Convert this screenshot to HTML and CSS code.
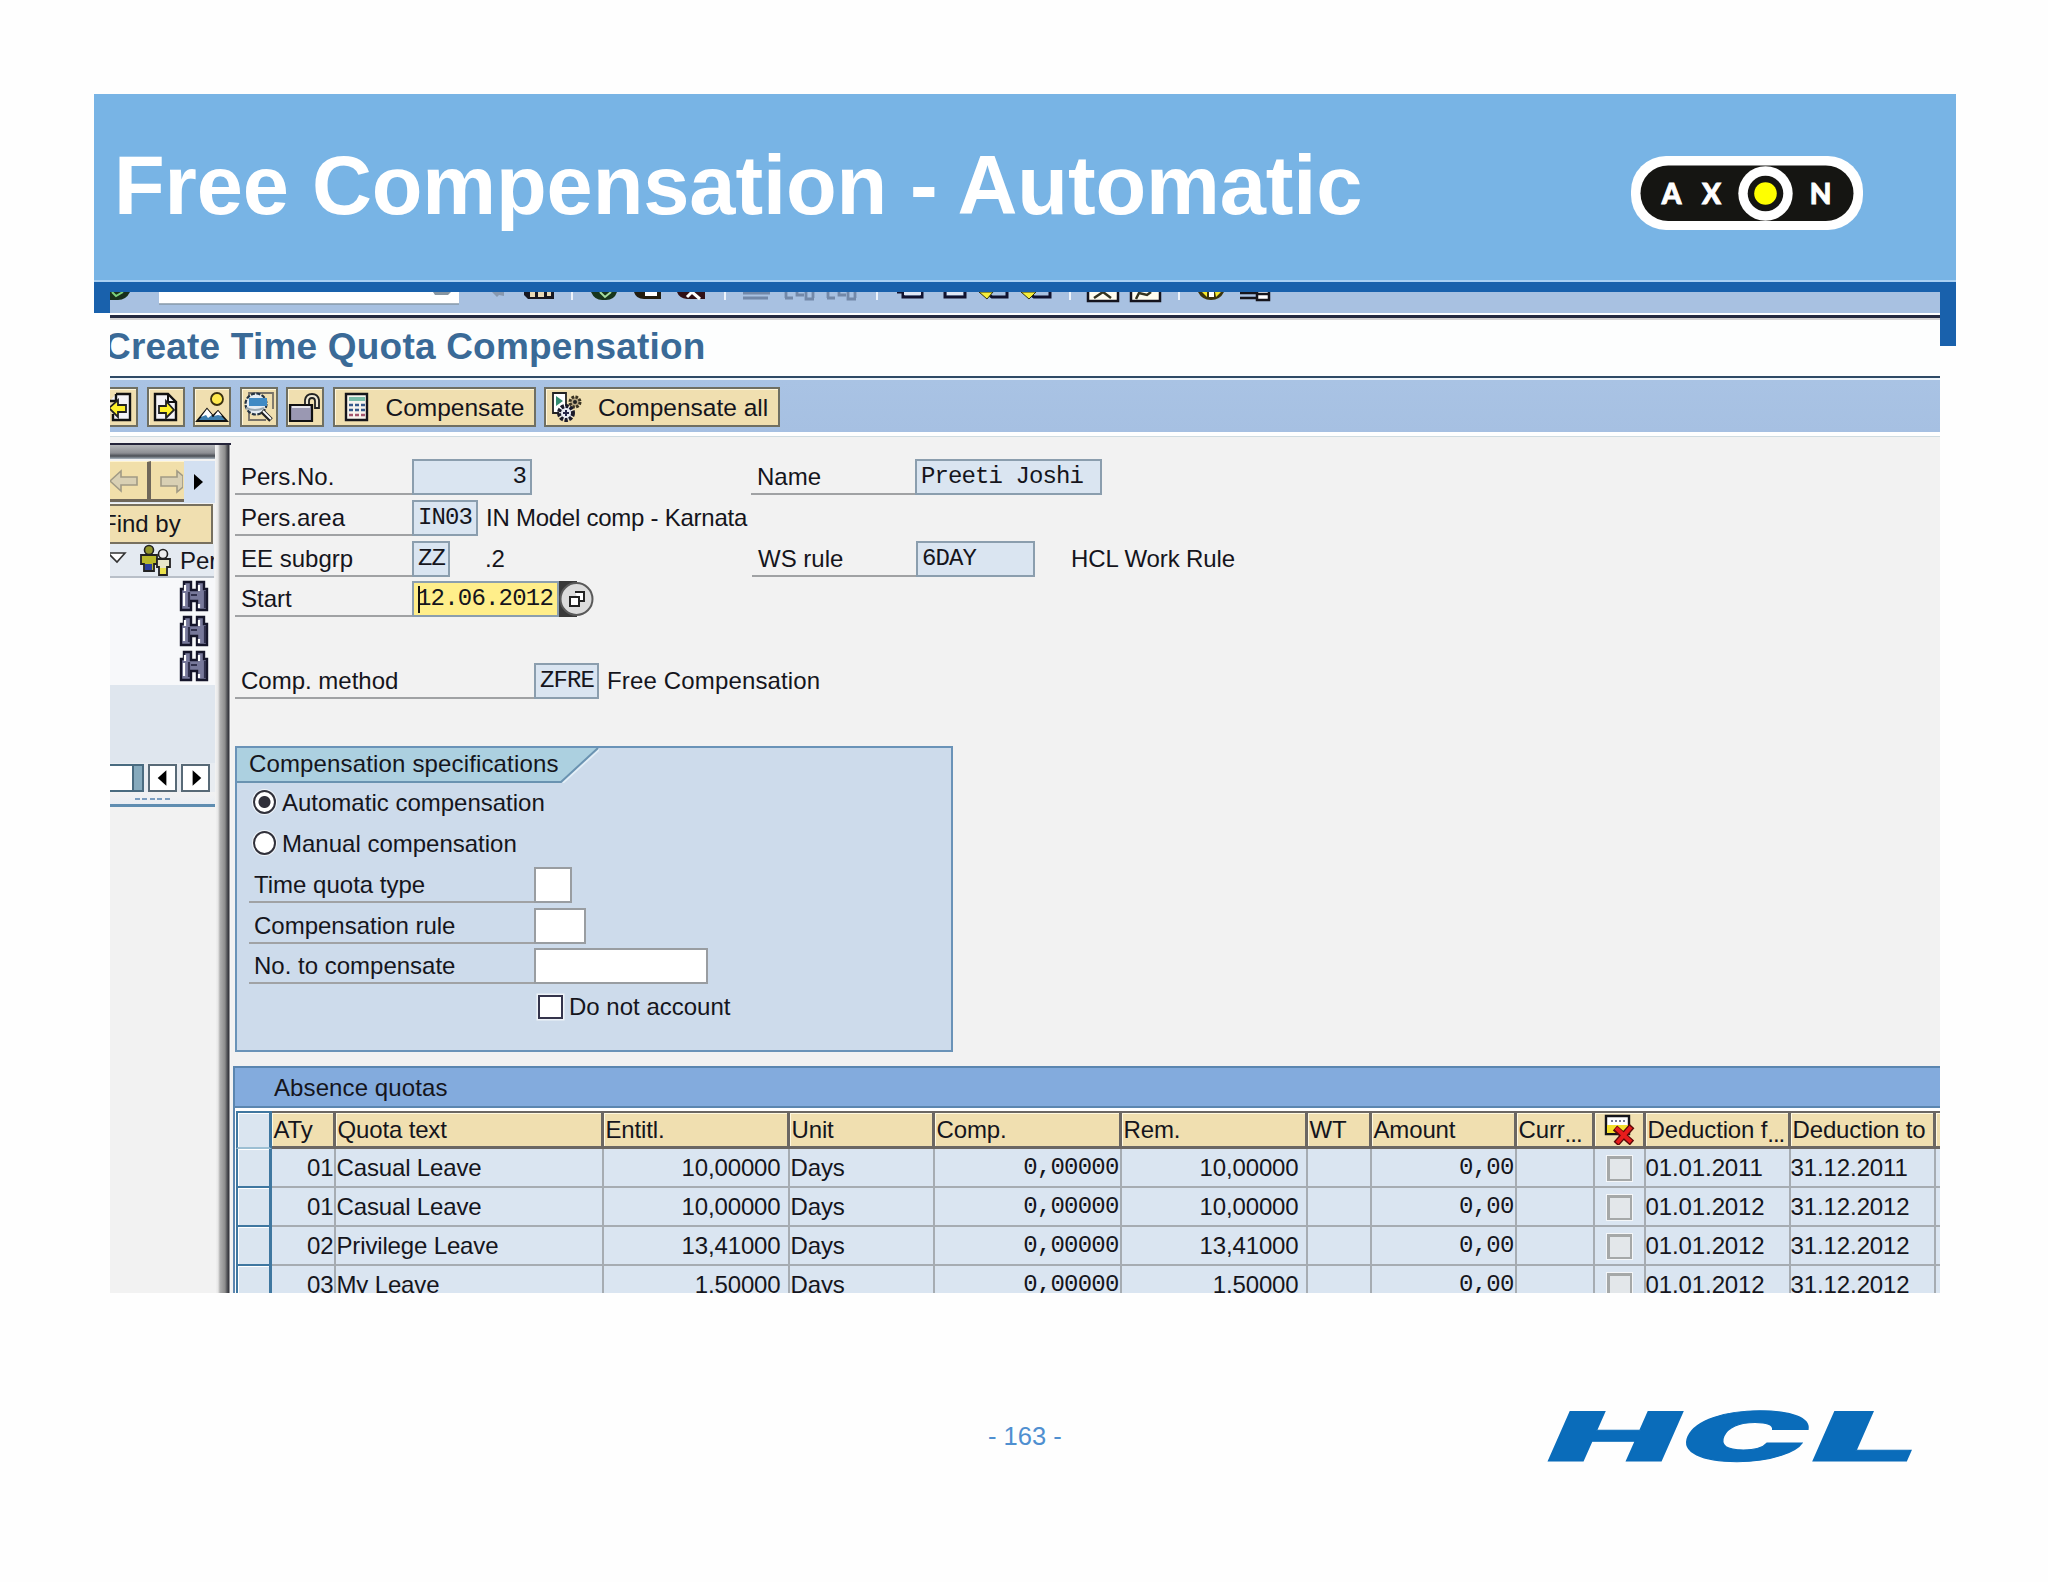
FILE: index.html
```html
<!DOCTYPE html>
<html lang="en">
<head>
<meta charset="utf-8">
<title>Free Compensation - Automatic</title>
<link rel="stylesheet" href="styles.css">
</head>
<body>
<svg class="defs" width="0" height="0">
  <symbol id="binoc" viewBox="0 0 30 32">
    <path d="M5 2h7v8h6V2h7v7h3v21H18v-9h-6v9H2V9h3z" fill="#77789a" stroke="#15152a" stroke-width="2.4"/>
    <path d="M6 5v6M5 13v13M20 5v6M20 24v4" stroke="#fff" stroke-width="2.2"/>
    <path d="M12 15h6M10 12v15M26 11v17" stroke="#30304c" stroke-width="2.2"/>
  </symbol>
</svg>
<main class="slide">
  <header class="banner">
    <h1>Free Compensation - Automatic</h1>
    <svg class="axon" viewBox="0 0 232 74" width="232" height="74">
      <rect width="232" height="74" rx="35" fill="#fff"/>
      <rect x="9.500" y="9.500" width="213" height="55.500" rx="27.700" fill="#151512"/>
      <circle cx="134.500" cy="37.500" r="27.200" fill="#fff"/>
      <circle cx="134.500" cy="37.500" r="17.800" fill="#151512"/>
      <circle cx="134.500" cy="37.500" r="11.300" fill="#ff0"/>
      <g class="axon-text"><text x="40.500" y="47.500">A</text><text x="80.500" y="47.500">X</text><text x="189.500" y="47.500">N</text></g>
    </svg>
  </header>
  <div class="bar"></div>
  <div class="stage">
    <div class="leg leg-left"></div>
    <section class="shot">
      <div class="menubar">
        <svg width="1830" height="21" viewBox="110 292 1830 21">
          <path d="M110 292h20q-4 8-12 8h-8z" fill="#18301c"/><path d="M112 292l4 4 7-4" stroke="#7bd07b" stroke-width="2" fill="none"/>
          <path d="M159 292h300v12H159z" fill="#fff"/><path d="M159 304h300" stroke="#8798a8" stroke-width="1.500"/><path d="M433 292h18l-3 3h-13z" fill="#8795a0"/>
          <path d="M492 292h12v4l-5-1-2 2z" fill="#8798ae"/>
          <path d="M524 292h30v7h-26l-4-4z" fill="#171720"/><path d="M530 292h5v5h-5zM538 292h6v5h-6zM547 292h4v4h-4z" fill="#ead9b5"/>
          <path d="M591 292h26q-3 9-13 8-9 1-13-8z" fill="#17351c"/><path d="M600 292l5 5 6-5" stroke="#a6dda0" stroke-width="2" fill="none"/>
          <path d="M634 292h27v7h-17q-8 0-10-7z" fill="#221d10"/><path d="M645 292h12v4h-12z" fill="#fff"/>
          <path d="M677 292h28v7h-18q-8-1-10-7z" fill="#301016"/><path d="M687 297l5-5 8 7" stroke="#fff" stroke-width="3" fill="none"/>
          <path d="M743 293h27M743 298h25M786 298v-6M793 298h-8M797 292v3h7M806 292v7h8M813 298v-6M828 298v-6M835 298h-8M839 292v3h7M848 292v7h8M855 298v-6" stroke="#7288a8" stroke-width="2.800" fill="none"/>
          <path d="M897 292h6v5h19v-5M945 292v5h20v-5M985 292l7 5h15v-5M1027 292l7 5h16v-5" stroke="#10122f" stroke-width="3" fill="none"/><path d="M904 292h17v3h-17zM947 292h16v3h-16z" fill="#dfe7f5"/>
          <path d="M979 292h14l-6 7zM1021 292h15l-7 7z" fill="#f5ee3b" stroke="#33320c"/>
          <path d="M1088 290h30v11h-30zM1131 290h29v11h-29z" fill="#fffdf0" stroke="#14141e" stroke-width="2.500"/><path d="M1094 298l9-6 8 6M1136 299l3-6 8 2 4-3" stroke="#34331f" stroke-width="2.500" fill="none"/>
          <path d="M1198 292h26q-4 8-13 8t-13-8z" fill="#3b330c"/><path d="M1202 292h5v5zM1215 292h6l-5 5z" fill="#f6e82b"/><path d="M1209 292h5v5h-5z" fill="#fff"/>
          <path d="M1240 293h16M1240 298h16M1257 290v10h12v-10M1257 294h12" stroke="#15151c" stroke-width="2.500" fill="#fff"/>
          <path d="M572 292v8M725 292v8M877 292v8M1070 292v8M1179 292v8" stroke="#eef4fb" stroke-width="2"/>
        </svg>
      </div>
      <div class="title"><h2>Create Time Quota Compensation</h2></div>
      <div class="toolbar">
        <div class="btn"><svg viewBox="0 0 38 40" width="38" height="40"><path d="M16 7h14v26H13v-6M16 7v7h-6" fill="#f4f3f7" stroke="#111" stroke-width="2.400"/><path d="M9 21l9-8v5h8v7h-8v5z" fill="#fff12b" stroke="#222" stroke-width="1.800"/></svg></div>
        <div class="btn"><svg viewBox="0 0 38 40" width="38" height="40"><path d="M8 7h13l8 8v18H8z" fill="#f4f3f7" stroke="#111" stroke-width="2.400"/><path d="M21 7v8h8" fill="none" stroke="#111" stroke-width="2"/><path d="M12 19h7v-5l8 9-8 8v-5h-7z" fill="#fff12b" stroke="#222" stroke-width="1.800"/></svg></div>
        <div class="btn"><svg viewBox="0 0 38 40" width="38" height="40"><circle cx="24" cy="12" r="6" fill="#ffe94d" stroke="#3a3010" stroke-width="1.800"/><path d="M4 34L14 22l6 7 5-5 9 10z" fill="#3d7eae" stroke="#111" stroke-width="1.800"/><path d="M14 22l-6 8 5-2 2 3 4-3zM25 24l-4 5 4-1 4 1z" fill="#fff"/></svg></div>
        <div class="btn"><svg viewBox="0 0 38 40" width="38" height="40"><path d="M9 9V6h24v16M9 22v11h17" fill="none" stroke="#777268" stroke-width="1.800"/><circle cx="16" cy="17" r="10.500" fill="#e5edf3" stroke="#253443" stroke-width="2.200" stroke-dasharray="4 1.500"/><path d="M9 11h18v8H9z" fill="#3f8ac4"/><path d="M6 21q9 4 18 0" stroke="#99a7b0" stroke-width="2" fill="none"/><path d="M22 24l9 9" stroke="#222" stroke-width="5"/><path d="M23 24l8 8" stroke="#fff" stroke-width="1.800"/></svg></div>
        <div class="btn"><svg viewBox="0 0 38 40" width="38" height="40"><path d="M19 17v-4q1-6 7-6t7 6v8h-4v-7q0-3-3-3t-3 3v4" fill="#eee8d5" stroke="#222" stroke-width="1.800"/><path d="M4 18h22v16H4z" fill="#9a98b2" stroke="#111" stroke-width="2.200"/><path d="M6 20h18" stroke="#fff" stroke-width="1.500"/></svg></div>
        <div class="btn btn-comp"><svg viewBox="0 0 26 30" width="26" height="30"><path d="M2 2h21v26H2z" fill="#f7f4ee" stroke="#15151b" stroke-width="2.400"/><path d="M5 5h16v4H5z" fill="#79bda9"/><path d="M5 13h4M11 13h4M17 13h4M5 18h4M11 18h4M17 18h4" stroke="#365a8b" stroke-width="2.600"/><path d="M5 23h4M11 23h4M17 23h4" stroke="#a4566e" stroke-width="2.600"/></svg><span>Compensate</span></div>
        <div class="btn btn-all"><svg viewBox="0 0 32 32" width="32" height="32"><path d="M2 2h13v20H2z" fill="#fff" stroke="#222" stroke-width="1.800"/><path d="M5 5l7 5-7 5z" fill="#348d70"/><circle cx="24" cy="11" r="5" fill="#b9a885" stroke="#3a3322" stroke-width="3" stroke-dasharray="2.600 1.300"/><circle cx="24" cy="11" r="2" fill="#222"/><circle cx="15" cy="22" r="7" fill="#e9ebf4" stroke="#1b1b2b" stroke-width="4" stroke-dasharray="3.200 1.400"/><path d="M12 22h6M15 19v6" stroke="#26264a" stroke-width="2"/></svg><span>Compensate all</span></div>
      </div>
      <div class="work">
        <aside class="side">
          <div class="side-in">
            <div class="nav">
              <div class="nav-b"><svg viewBox="0 0 37 38" width="37" height="38"><path d="M0 19l11-10v6h16v8H11v6z" fill="#d9d0b4" stroke="#a19a85" stroke-width="1.600"/></svg></div>
              <div class="nav-b"><svg viewBox="0 0 32 38" width="32" height="38"><path d="M10 15h16V9l6 5v11l-6 5v-6H10z" fill="#d9d0b4" stroke="#a19a85" stroke-width="1.600"/></svg></div>
              <div class="nav-m"><svg viewBox="0 0 28 40" width="28" height="40"><path d="M10 13l9 8-9 8z" fill="#000"/></svg></div>
            </div>
            <div class="find">Find by</div>
            <div class="tree"><svg viewBox="0 0 64 32" width="64" height="32"><path d="M-2 9h17l-8 9z" fill="#fff" stroke="#333" stroke-width="1.600"/>
              <circle cx="39" cy="6" r="4.500" fill="#92952a" stroke="#222" stroke-width="1.600"/><path d="M31 11h16v9h-3v7H34v-7h-3z" fill="#b9b92c" stroke="#222" stroke-width="1.800"/><path d="M35 20h7v6h-7z" fill="#2c3f9e"/><circle cx="53" cy="10" r="4.500" fill="#eee" stroke="#222" stroke-width="1.600"/><path d="M47 15h13v8h-3v8h-8v-8h-2z" fill="#e9e6c9" stroke="#222" stroke-width="1.800"/><path d="M50 24h6v6h-6z" fill="#e9e04a"/></svg><span>Per</span></div>
            <div class="list"><svg><use href="#binoc"/></svg><svg><use href="#binoc"/></svg><svg><use href="#binoc"/></svg></div>
            <div class="gap"></div>
            <div class="scroll"><i class="thumb"></i><i class="track"></i><b><svg viewBox="0 0 26 24" width="26" height="24"><path d="M17 4v16l-9-8z"/></svg></b><b><svg viewBox="0 0 26 24" width="26" height="24"><path d="M10 4v16l9-8z"/></svg></b></div>
            <div class="grip"></div>
          </div>
          <div class="split"></div>
        </aside>
        <div class="content">
          <div class="form">
            <div class="row"><label class="w177">Pers.No.</label><span class="fld r" style="width:120px">3</span><label class="w164 second-a">Name</label><span class="fld" style="width:187px">Preeti Joshi</span></div>
            <div class="row"><label class="w177">Pers.area</label><span class="fld" style="width:66px">IN03</span><span class="txt area">IN Model comp - Karnata</span></div>
            <div class="row"><label class="w177">EE subgrp</label><span class="fld" style="width:38px">ZZ</span><span class="txt dot2">.2</span><label class="w164 second-b">WS rule</label><span class="fld" style="width:119px">6DAY</span><span class="txt hcl">HCL Work Rule</span></div>
            <div class="row"><label class="w177">Start</label><span class="fld date">12.06.2012</span><svg class="help" viewBox="0 0 36 36" width="36" height="36"><path d="M0 0h18v36H0z" fill="#3a3a3a"/><circle cx="17.500" cy="18" r="16" fill="#dcdcdc" stroke="#5a5a5a" stroke-width="2"/><path d="M16 11h9v9h-5M11 16h9v9h-9z" fill="#fff" stroke="#222" stroke-width="2"/></svg></div>
            <div class="row"></div>
            <div class="row"><label class="w299">Comp. method</label><span class="fld" style="width:65px">ZFRE</span><span class="txt free">Free Compensation</span></div>
          </div>
          <div class="group">
            <div class="tab"><svg viewBox="0 0 362 35" width="362" height="35"><path d="M0 0h361l-37 34H0z" fill="#acd0e0"/><path d="M361 0l-37 34H0" fill="none" stroke="#6a93b1" stroke-width="2"/><path d="M363 1l-37 34" stroke="#e4f0f8" stroke-width="1.500"/></svg><span>Compensation specifications</span></div>
            <div class="row opt"><i class="radio on"></i>Automatic compensation</div>
            <div class="row opt"><i class="radio"></i>Manual compensation</div>
            <div class="row ind"><label class="w285">Time quota type</label><span class="fld white" style="width:38px"></span></div>
            <div class="row ind"><label class="w285">Compensation rule</label><span class="fld white" style="width:52px"></span></div>
            <div class="row ind"><label class="w285">No. to compensate</label><span class="fld white" style="width:174px"></span></div>
            <div class="row acc"><i class="check"></i>Do not account</div>
          </div>
          <div class="table">
            <div class="cap">Absence quotas</div>
            <div class="tr head"><i></i><span>ATy</span><span>Quota text</span><span>Entitl.</span><span>Unit</span><span>Comp.</span><span>Rem.</span><span>WT</span><span>Amount</span><span>Curr<em>...</em></span><span class="ic"><svg viewBox="0 0 32 32" width="32" height="32"><path d="M3 3h23v18H3z" fill="#fff" stroke="#15151a" stroke-width="2.400"/><path d="M4 12h21v8H4z" fill="#f4df2c"/><path d="M8 8h14" stroke="#777b91" stroke-width="2" stroke-dasharray="2 2"/><path d="M12 15l17 15M29 13L13 31" stroke="#5b0808" stroke-width="6.500"/><path d="M13 15l15 14M28 14L14 30" stroke="#e81c1c" stroke-width="4"/></svg></span><span>Deduction f<em>...</em></span><span>Deduction to</span><span></span></div>
            <div class="tr"><i></i><span class="n0">01</span><span>Casual Leave</span><span class="n">10,00000</span><span>Days</span><span class="m">0,00000</span><span class="n">10,00000</span><span></span><span class="m">0,00</span><span></span><span class="c"><u></u></span><span class="d">01.01.2011</span><span class="d">31.12.2011</span><span></span></div>
            <div class="tr"><i></i><span class="n0">01</span><span>Casual Leave</span><span class="n">10,00000</span><span>Days</span><span class="m">0,00000</span><span class="n">10,00000</span><span></span><span class="m">0,00</span><span></span><span class="c"><u></u></span><span class="d">01.01.2012</span><span class="d">31.12.2012</span><span></span></div>
            <div class="tr"><i></i><span class="n0">02</span><span>Privilege Leave</span><span class="n">13,41000</span><span>Days</span><span class="m">0,00000</span><span class="n">13,41000</span><span></span><span class="m">0,00</span><span></span><span class="c"><u></u></span><span class="d">01.01.2012</span><span class="d">31.12.2012</span><span></span></div>
            <div class="tr"><i></i><span class="n0">03</span><span>My Leave</span><span class="n">1,50000</span><span>Days</span><span class="m">0,00000</span><span class="n">1,50000</span><span></span><span class="m">0,00</span><span></span><span class="c"><u></u></span><span class="d">01.01.2012</span><span class="d">31.12.2012</span><span></span></div>
          </div>
        </div>
      </div>
    </section>
    <div class="leg leg-right"></div>
  </div>
  <footer class="foot">
    <span></span>
    <span class="page">- 163 -</span>
    <svg class="hcl-logo" viewBox="0 0 370 54" width="370" height="54">
      <g class="hcl-text">
        <text transform="matrix(2.500 0 -.440 1 -8 51)">H</text>
        <text transform="matrix(2.500 0 -.440 1 123 51)">C</text>
        <text transform="matrix(2.750 0 -.440 1 256 51)">L</text>
      </g>
    </svg>
  </footer>
</main>
</body>
</html>
```
FILE: styles.css
```css
* { box-sizing: border-box; }
body { margin: 0; background: #fefefe; font-family: "Liberation Sans", Arial, sans-serif; }
.defs { position: absolute; }
.slide { width: 2048px; height: 1582px; padding: 94px 92px 0 94px; overflow: hidden; color: #15151c; font-size: 24px; }

.banner { height: 188px; background: #78b4e5; border-bottom: 2px solid #a9d0f3; display: flex; justify-content: space-between; align-items: flex-start; padding: 0 93px 0 20px; }
.banner h1 { margin: 44px 0 0; font-size: 83px; line-height: 95px; letter-spacing: -.1px; color: #fff; white-space: nowrap; }
.axon { margin-top: 62px; }
.axon-text { font: 900 28px Lato, sans-serif; fill: #fff; stroke: #fff; stroke-width: .9px; text-anchor: middle; }
.bar { height: 10px; background: #1961ac; }

.stage { display: grid; grid-template-columns: 16px 1830px 16px; align-items: start; }
.leg { background: #1961ac; }
.leg-left { height: 21px; }
.leg-right { height: 54px; }
.shot { height: 1001px; overflow: hidden; background: #f2f2f2; display: flex; flex-direction: column; }

.menubar { height: 21px; flex: none; background: #a8c1e1; }
.menubar svg { display: block; }
.title { height: 63px; flex: none; background: linear-gradient(#fff 2px, #262b40 2px, #262b40 5px, #d5d3d3 5px, #d5d3d3 7px, #fdfefe 7px); overflow: hidden; }
.title h2 { margin: 13px 0 0 -6px; font-size: 37px; line-height: 42px; letter-spacing: .2px; color: #3a6a97; white-space: nowrap; }
.toolbar { height: 63px; flex: none; padding-top: 11px; display: flex; gap: 8.500px; margin-left: -10px; background: linear-gradient(#2f4a66 2px, #eef5fb 2px, #eef5fb 4px, #a9c3e4 4px, #a6c0e2 56px, #fff 56px, #fff 60px, #cfdbe0 60px, #cfdbe0 61px, #f2f2f2 61px); }
.btn { width: 38px; height: 40px; flex: none; background: #f0dfb0; border: 2px solid #6f6f62; box-shadow: inset 1px 1px #fff6da; display: flex; align-items: center; justify-content: center; font-size: 24.500px; white-space: nowrap; }
.btn svg { flex: none; }
.btn span { padding-top: 2px; }
.btn-comp { width: 203px; justify-content: flex-start; padding-left: 9px; gap: 16px; }
.btn-all { width: 236px; justify-content: flex-start; padding-left: 5px; gap: 15px; }

.work { flex: 1; display: flex; min-height: 0; }
.side { width: 121px; flex: none; display: flex; padding-top: 4px; }
.side-in { width: 105px; padding-top: 18px; background: linear-gradient(#24243a 2px, #b5b7ba 2px, #8d8f94 10px, #4a4e55 13px, #aab6c0 16px, transparent 16px); }
.split { width: 16px; background: linear-gradient(90deg, #f4f4f4 0, #e6e6e6 3px, #b0b0b0 5px, #8c8c8c 10px, #55565a 12px, #303138 14px, #f5f5f5 15px); border-top: 2px solid #24243a; }
.nav { height: 42px; display: flex; background: #dfe7f1; }
.nav-b { height: 41px; border-bottom: 3px solid #6f675a; background: #f1dfaa; border-top: 1px solid #fff4d0; overflow: hidden; }
.nav-b:first-child { width: 41px; border-right: 4px solid #6f675a; }
.nav-b:nth-child(2) { width: 33px; }
.nav-m { width: 31px; background: #d3e0f1; }
.find { height: 40px; width: 103px; background: #f0dfb0; border: 2px solid #77705f; border-left: 0; margin-top: 1px; line-height: 36px; text-indent: -8px; overflow: hidden; }
.tree { height: 34px; width: 104px; display: flex; gap: 6px; background: #e4eaf1; border-bottom: 2px solid #b8bfc8; overflow: hidden; line-height: 33px; }
.tree svg, .list svg { flex: none; }
.list { height: 107px; padding: 2px 6px 0 0; background: #f7f8fa; display: flex; flex-direction: column; gap: 3px; align-items: flex-end; }
.list svg { width: 30px; height: 32px; }
.gap { height: 78px; background: #dfe6ee; }
.scroll { height: 29px; display: flex; align-items: center; background: #e8ecf1; }
.scroll i { height: 28px; border: 2px solid #496b80; border-left: 0; }
.thumb { width: 24px; background: #fff; }
.track { width: 10px; background: #86aabd; }
.scroll b { width: 29px; height: 28px; margin-left: 4px; background: #fff; border: 2px solid #586a77; display: flex; justify-content: center; align-items: center; }
.grip { height: 15px; background: linear-gradient(#f2f2f2, #e9edf3); border-bottom: 3px solid #5f8db1; display: flex; justify-content: center; }
.grip::before { content: ""; width: 35px; height: 2px; margin: 6px 20px 0 0; background: repeating-linear-gradient(90deg, #7a9dc0 0 5px, transparent 5px 7.500px); }

.content { flex: 1; min-width: 0; padding: 20px 0 0 2px; }
.form { margin-left: 2px; }
.row { height: 40.800px; display: flex; align-items: flex-start; line-height: 35px; white-space: nowrap; }
label { height: 36px; padding-left: 6px; border-bottom: 2px solid #a0a2a4; flex: none; }
.w177 { width: 177px; }
.w299 { width: 299px; }
.w285 { width: 285px; padding-left: 5px; }
.w164 { width: 164px; }
.second-a { margin-left: 219px; }
.fld { height: 36px; flex: none; border: 2px solid #8b9eae; background: #dae5f1; font: 24px/31px "Liberation Mono", monospace; letter-spacing: -.9px; padding-left: 4px; }
.fld.r { text-align: right; padding-right: 4px; }
.fld.date { width: 147px; background: #ffee8a; padding-left: 3px; letter-spacing: -.8px; position: relative; }
.fld.date::before { content: ""; position: absolute; left: 4px; top: 3px; width: 2px; height: 27px; background: #111; }
.fld.white { background: #fff; border-color: #999da1; }
.txt { margin-left: 8px; letter-spacing: -.1px; }
.area { letter-spacing: -.25px; }
.free { letter-spacing: .15px; }
.dot2 { width: 20px; margin-left: 35px; margin-right: -1px; }
.second-b { margin-left: 248px; }
.hcl { margin-left: 36px; }

.group { width: 718px; height: 306px; margin: 42px 0 0 2px; border: 2px solid #6a93b8; background: #cddbeb; }
.tab { height: 37.500px; display: grid; letter-spacing: .15px; line-height: 32px; }
.tab svg, .tab span { grid-area: 1 / 1; }
.tab span { padding-left: 12px; }
.opt { padding-left: 16px; }
.radio { width: 23px; height: 24px; margin: 5px 6px 0 0; border: 2px solid #30303a; border-radius: 50%; background: #fff; box-shadow: 0 0 0 1px #eef3f8; flex: none; }
.radio.on { background: radial-gradient(circle, #30303a 5.500px, #fff 6.500px); }
.ind { padding-left: 12px; }
.acc { padding-left: 301px; }
.check { width: 25px; height: 24px; margin: 6px 6px 0 0; border: 2px solid #34344c; background: #fff; box-shadow: 0 0 0 1.500px #eef3f8; flex: none; }

.table { margin-top: 14px; width: 1707px; border-left: 2px solid #5b86b0; background: #fff; }
.cap { height: 42px; background: #83abdd; border-top: 2px solid #5b86b0; border-bottom: 2px solid #5b86b0; padding-left: 39px; line-height: 40px; letter-spacing: .1px; }
.tr { display: grid; width: 1704px; overflow: hidden; margin-left: 1px; height: 39px; line-height: 38px; grid-template-columns: 35.500px 64px 268px 186px 145px 187px 186px 64px 145px 78px 51px 145px 145px 6px; }
.tr > i { border: solid #3f77a0; border-width: 0 3px 2px 2px; background: #dae5f0; box-shadow: inset 1px 1px #fff; }
.tr > span { background: #dae5f1; border-right: 2px solid #a6acb2; border-bottom: 2px solid #a6acb2; padding-left: 1px; white-space: nowrap; overflow: hidden; letter-spacing: -.15px; }
.head { height: 38px; margin-top: 3px; line-height: 33px; }
.tr.head > i { border-top: 2px solid #3f77a0; border-bottom-color: #9cbfd3; }
.tr.head > span { background: #f0dfb0; border: solid #6b6763; border-width: 2px 3px 3px 0; box-shadow: inset 1px 1px #fff8e0; padding-left: 2px; }
.tr > span:last-child { border-right: 0; }
.tr.head > .ic { padding-left: 8px; }
.ic svg { display: block; }
em { font-style: normal; position: relative; top: 4px; letter-spacing: -1px; }
.tr > .n0 { text-align: right; padding: 0; margin: 0; }
.tr > .n { text-align: right; padding-right: 7px; }
.tr > .m { text-align: right; padding-right: 1px; font: 24px/37px "Liberation Mono", monospace; letter-spacing: -.8px; }
.tr > .d { padding-left: 0; letter-spacing: -.1px; }
.c { display: flex; justify-content: center; }
.c u { width: 25px; height: 25px; margin-top: 7px; border: 3px solid #a5a8a8; border-width: 3px 2px 2px 3px; background: #e3e7ea; box-shadow: 0 0 0 1px #f4f6f8; }

.foot { display: grid; grid-template-columns: 894px 291px 1fr; align-items: start; height: 180px; }
.page { margin-top: 128px; font-size: 25.500px; line-height: 30px; color: #4f8fd0; }
.hcl-logo { margin: 117px 0 0 270px; overflow: visible; }
.hcl-text { font: 900 68px Inter, "Liberation Sans", sans-serif; fill: #0a6cba; stroke: #0a6cba; stroke-width: 1px; }
```
